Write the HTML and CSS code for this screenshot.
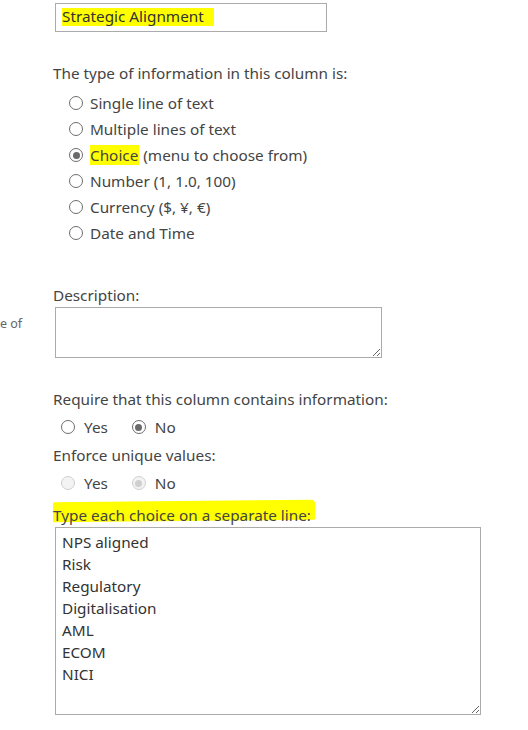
FILE: index.html
```html
<!DOCTYPE html>
<html>
<head>
<meta charset="utf-8">
<link rel="stylesheet" href="styles.css">
</head>
<body>
<div class="page">
  <div class="field-name">
    <div class="textbox"><span class="hl">Strategic Alignment</span></div>
  </div>

  <div class="label type-label">The type of information in this column is:</div>
  <div class="radio-list">
    <div class="radio-row"><span class="radio"></span><span>Single line of text</span></div>
    <div class="radio-row"><span class="radio"></span><span>Multiple lines of text</span></div>
    <div class="radio-row"><span class="radio checked"></span><span><span class="hl hl-choice">Choice</span> (menu to choose from)</span></div>
    <div class="radio-row"><span class="radio"></span><span>Number (1, 1.0, 100)</span></div>
    <div class="radio-row"><span class="radio"></span><span>Currency ($, ¥, €)</span></div>
    <div class="radio-row"><span class="radio"></span><span>Date and Time</span></div>
  </div>

  <div class="desc-section">
    <div class="side-note">e of</div>
    <div class="desc-main">
      <div class="label">Description:</div>
      <textarea class="desc-box"></textarea>
    </div>
  </div>

  <div class="label req-label">Require that this column contains information:</div>
  <div class="inline-radios">
    <div class="radio-row"><span class="radio"></span><span>Yes</span></div>
    <div class="radio-row"><span class="radio checked"></span><span>No</span></div>
  </div>

  <div class="label small-gap">Enforce unique values:</div>
  <div class="inline-radios disabled">
    <div class="radio-row"><span class="radio"></span><span>Yes</span></div>
    <div class="radio-row"><span class="radio checked"></span><span>No</span></div>
  </div>

  <div class="label choices-label"><span class="marker">Type each choice on a separate line:</span></div>
  <textarea class="choices-box">NPS aligned
Risk
Regulatory
Digitalisation
AML
ECOM
NICI</textarea>
</div>
</body>
</html>
```

FILE: styles.css
```css
html, body {
  margin: 0;
  padding: 0;
  background: #ffffff;
}

body {
  font-family: "Noto Sans", "Open Sans", sans-serif;
  font-size: 15.3px;
  color: #444444;
  width: 528px;
  height: 730px;
  overflow: hidden;
}

.page {
  padding: 3px 0 0 53px;
}

.field-name {
  padding-left: 2px;
}

.textbox {
  width: 264px;
  height: 27px;
  border: 1px solid #ababab;
  box-sizing: content-box;
  padding: 0 0 0 6px;
  line-height: 27px;
  color: #333;
  white-space: nowrap;
}

.hl {
  background: #ffff00;
}

.textbox .hl {
  display: inline-block;
  line-height: 17px;
  padding: 0 10px 1px 0;
  vertical-align: 1px;
}

.label {
  line-height: 20px;
  white-space: nowrap;
}

.type-label {
  margin-top: 31px;
}

.radio-list {
  margin-top: 7px;
  padding-left: 16px;
  display: flex;
  flex-direction: column;
}

.radio-row {
  height: 26px;
  display: flex;
  align-items: center;
  gap: 7px;
  white-space: nowrap;
}

.radio {
  width: 12px;
  height: 12px;
  border: 1px solid #6d6d6d;
  border-radius: 50%;
  background: #fff;
  display: flex;
  align-items: center;
  justify-content: center;
  flex: none;
}

.radio.checked::after {
  content: "";
  width: 7px;
  height: 7px;
  border-radius: 50%;
  background: #6a6a6a;
}

.hl-choice {
  display: inline-block;
  line-height: 20px;
  padding-right: 1px;
}

.desc-section {
  margin-top: 39px;
  margin-left: -53px;
  display: grid;
  grid-template-columns: 53px 1fr;
}

.side-note {
  font-size: 12.5px;
  color: #666;
  padding-top: 30px;
  white-space: nowrap;
}

.desc-main {
  display: flex;
  flex-direction: column;
  align-items: flex-start;
}

.desc-box {
  margin: 2px 0 0 2px;
  width: 325px;
  height: 49px;
  border: 1px solid #ababab;
  padding: 0;
  box-sizing: content-box;
  font-family: inherit;
  resize: both;
  display: block;
}

.req-label {
  margin-top: 31px;
}

.inline-radios {
  margin-top: 5px;
  padding-left: 8px;
  display: flex;
  gap: 24px;
}

.inline-radios .radio-row {
  gap: 9px;
}

.small-gap {
  margin-top: 5px;
}

.inline-radios.disabled .radio {
  border-color: #cfcfcf;
  background: #f3f3f3;
}

.inline-radios.disabled .radio.checked::after {
  background: #cfcfcf;
}

.choices-label {
  margin-top: 9px;
}

.marker {
  position: relative;
  z-index: 0;
  display: inline-block;
  line-height: 20px;
}

.marker::before {
  content: "";
  position: absolute;
  left: 0;
  right: -4px;
  top: -4px;
  height: 20px;
  background: #ffff00;
  border-radius: 1px 4px 1px 1px;
  transform: skewY(-0.6deg);
  z-index: -1;
}

.choices-box {
  display: block;
  margin: 2px 0 0 2px;
  width: 412px;
  height: 175px;
  border: 1px solid #ababab;
  padding: 3px 6px 8px 6px;
  box-sizing: content-box;
  font-family: inherit;
  font-size: 15.3px;
  line-height: 22px;
  color: #333;
  resize: both;
  overflow: hidden;
}
```
